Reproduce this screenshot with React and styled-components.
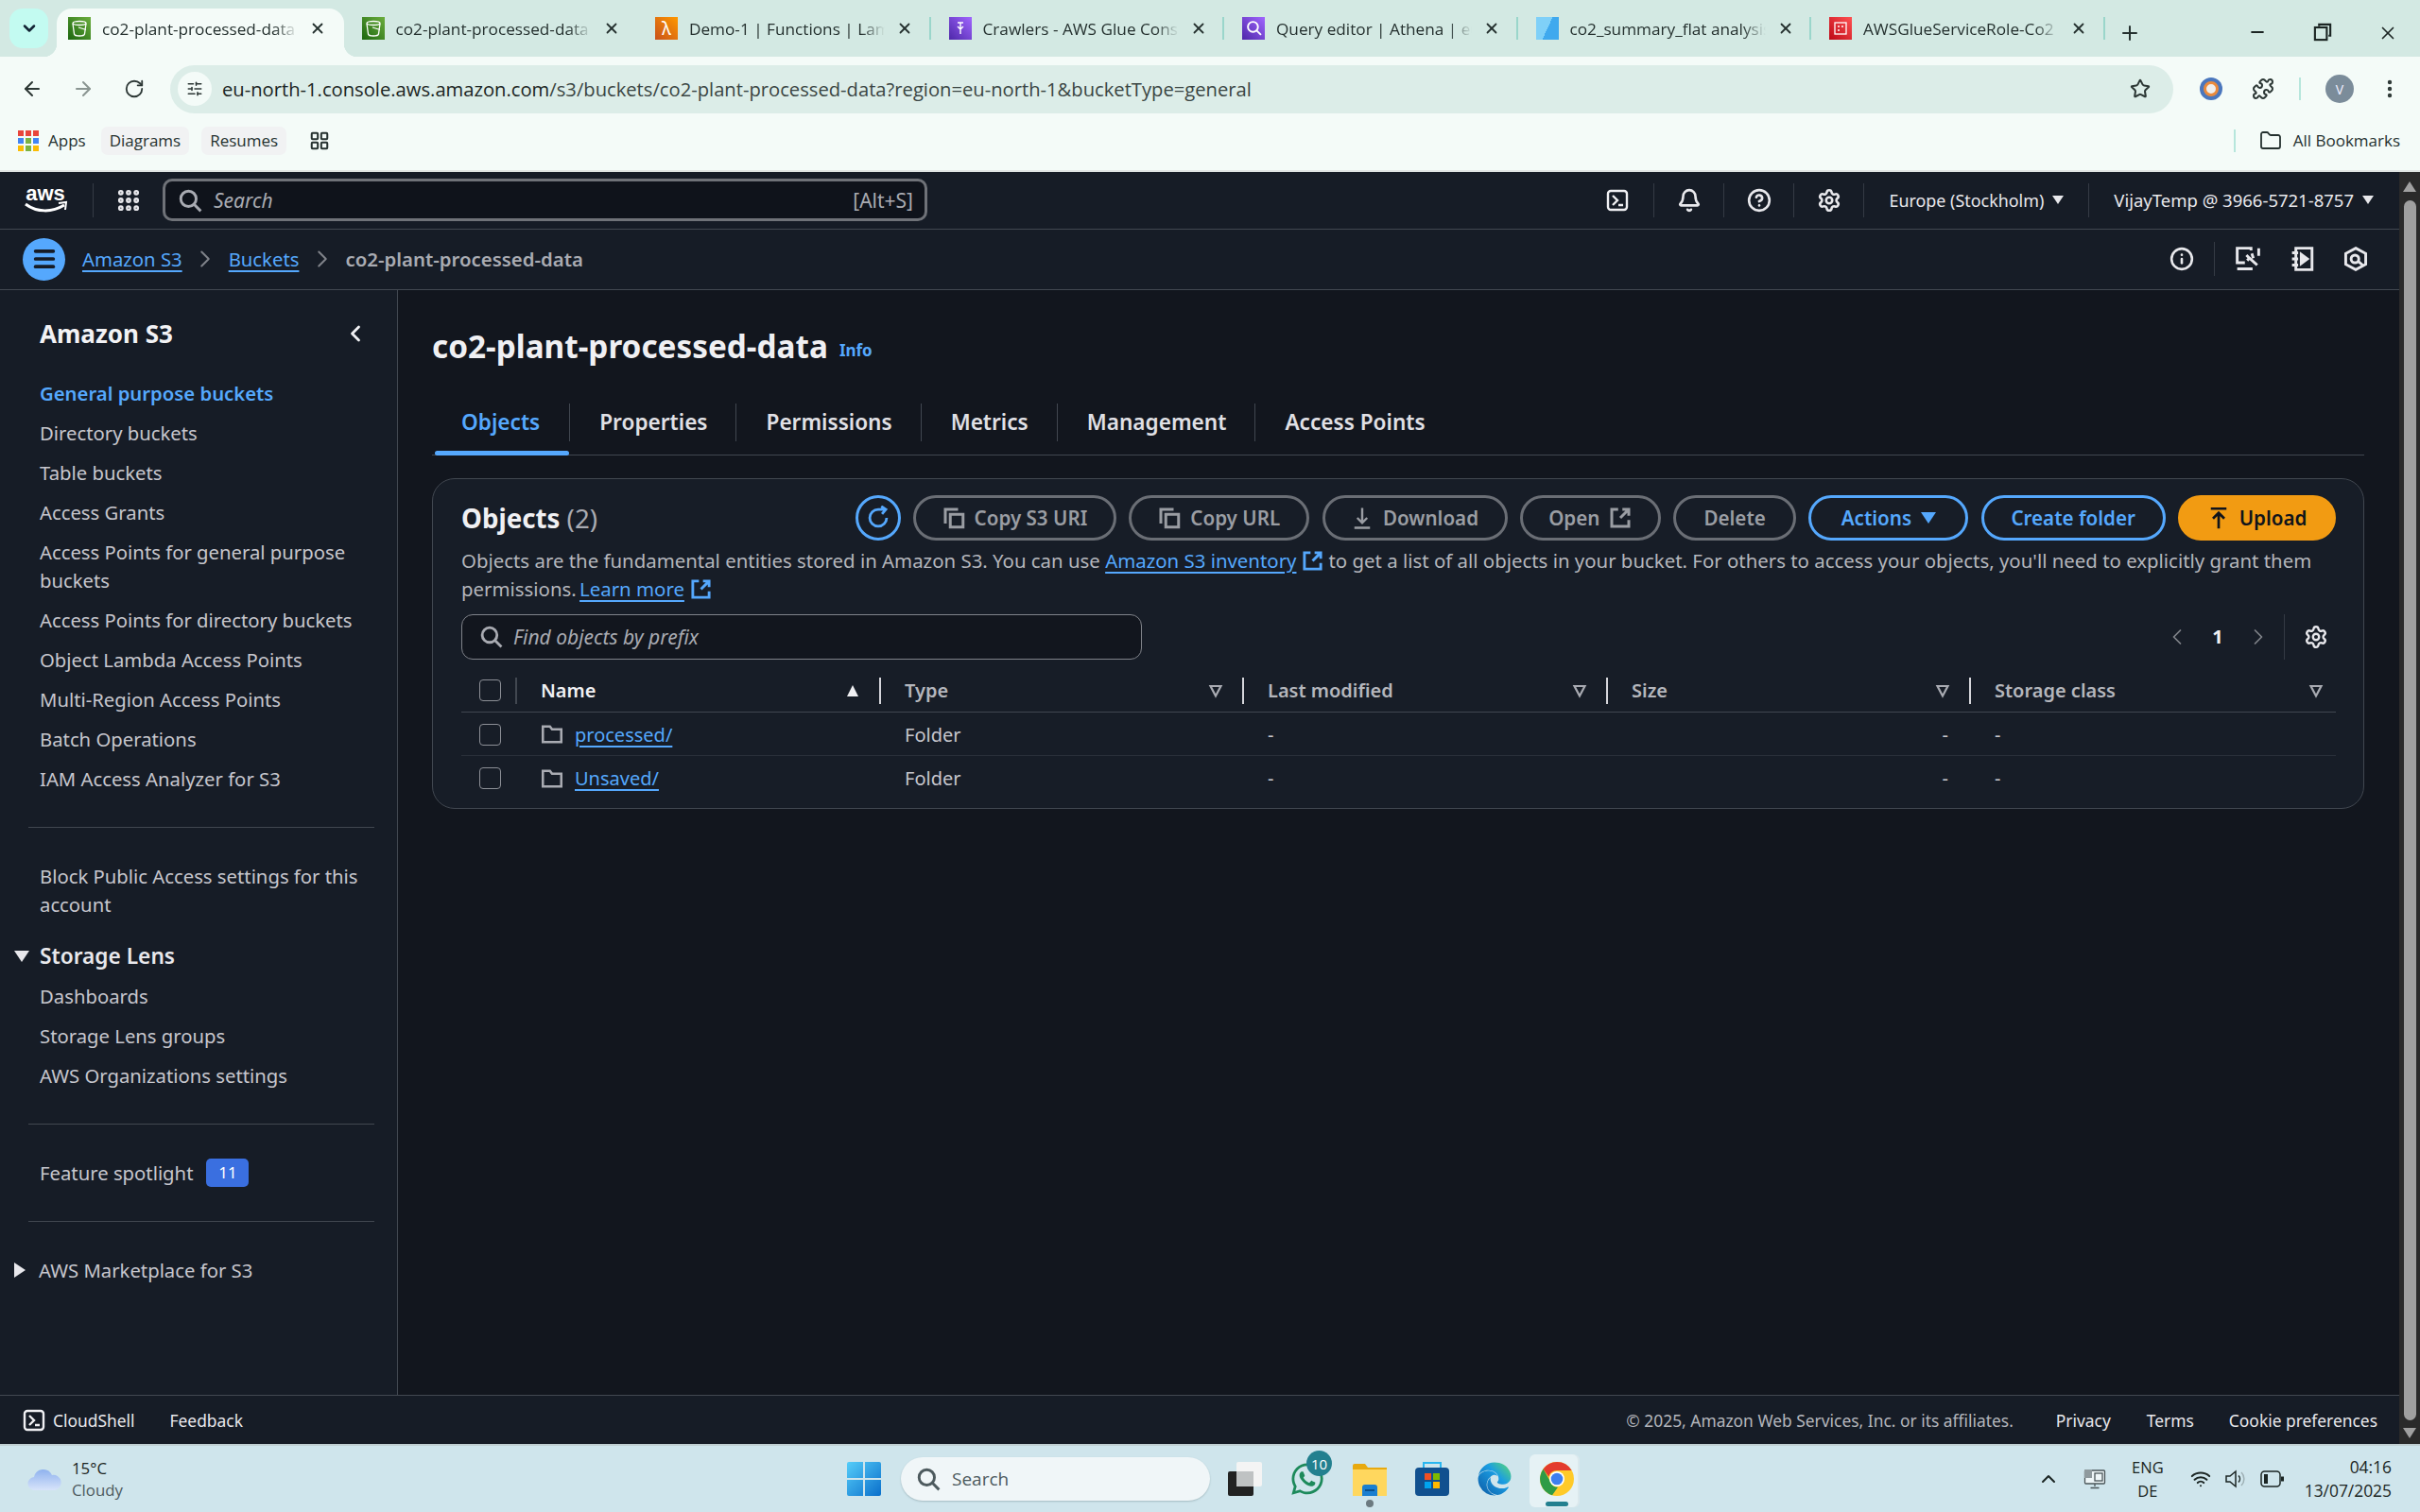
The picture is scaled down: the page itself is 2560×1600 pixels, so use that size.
import React from 'react';
import styled, { createGlobalStyle } from 'styled-components';
import {
  ChevronDown, X, Plus, Minus, ArrowLeft, ArrowRight, RotateCw, Star, Puzzle, MoreVertical, SlidersHorizontal,
  Bell, CircleHelp, Settings, Info, ChevronLeft, ChevronRight, Grip, LayoutGrid, ChevronUp, Wifi, Menu, Folder as LucideFolder,
} from 'lucide-react';
import { FaWhatsapp, FaEdge } from 'react-icons/fa';

const GlobalStyle = createGlobalStyle`
  html, body { margin: 0; padding: 0; background: #161c26; }
  body { font-family: "Noto Sans", "Open Sans", sans-serif; }
  * { box-sizing: border-box; }
`;

const BLUE = '#55a8fd';
const TEXT = '#c6c6cd';
const LINE = '#414750';
const TABLE_COLS = '57px 385px 384px 385px 384px 1fr';

const Page = styled.div`
  width: 2560px;
  height: 1600px;
  display: flex;
  flex-direction: column;
  overflow: hidden;
`;

/* ---- browser ---- */
const TabStrip = styled.div`
  height: 60px;
  background: #d3e9e3;
  display: flex;
  align-items: flex-end;
  padding-left: 10px;
`;
const TabSearch = styled.div`
  width: 41px;
  height: 42px;
  margin: 0 9px 9px 0;
  border-radius: 14px;
  background: #c3fbf1;
  color: #123;
  display: flex;
  align-items: center;
  justify-content: center;
`;
const Tab = styled.div`
  position: relative;
  width: ${p => (p.$active ? 303.5 : 310.5)}px;
  height: 51px;
  padding: 0 15px 9px ${p => (p.$active ? 12 : 19)}px;
  display: flex;
  align-items: center;
  gap: 12px;
  color: #25312f;
  border-radius: 16px 16px 0 0;
  background: ${p => (p.$active ? '#f4fbf8' : 'transparent')};
  ${p => p.$sep && `
    &::after {
      content: '';
      position: absolute;
      right: 0;
      top: 9px;
      width: 2px;
      height: 24px;
      background: #9ad6cb;
    }
  `}
  ${p => p.$active && `
    &::before, &::after {
      content: '';
      position: absolute;
      bottom: 0;
      width: 14px;
      height: 14px;
    }
    &::before {
      left: -14px;
      background: radial-gradient(circle at 0 0, transparent 14px, #f4fbf8 14.5px);
    }
    &::after {
      right: -14px;
      background: radial-gradient(circle at 100% 0, transparent 14px, #f4fbf8 14.5px);
    }
  `}
`;
const Favicon = styled.div`
  width: 24px;
  height: 24px;
  flex: none;
  background: ${p => p.$bg};
  display: flex;
  align-items: center;
  justify-content: center;
  color: #fff;
`;
const TabTitle = styled.div`
  width: 207px;
  flex: none;
  padding-top: 2px;
  font-family: "Open Sans", sans-serif;
  font-size: 17.2px;
  white-space: nowrap;
  overflow: hidden;
  -webkit-mask-image: linear-gradient(to right, #000 88%, transparent);
  mask-image: linear-gradient(to right, #000 88%, transparent);
`;
const NewTab = styled.div`
  width: 30px;
  margin: 0 0 13px 14px;
  color: #25312f;
  display: flex;
`;
const WindowButtons = styled.div`
  margin-left: auto;
  margin-bottom: 14px;
  display: flex;
  color: #1b2523;
`;
const WindowButton = styled.div`
  width: 69px;
  display: flex;
  justify-content: center;
`;

const Toolbar = styled.div`
  height: 60px;
  background: #f4fbf8;
  display: flex;
  align-items: center;
  padding: 9px 0 0 7px;
  color: #2c3735;
`;
const NavIcon = styled.div`
  width: 54px;
  flex: none;
  display: flex;
  justify-content: center;
  color: ${p => (p.$dim ? '#8a9592' : '#2c3735')};
`;
const AddressBar = styled.div`
  width: 2119px;
  height: 51px;
  margin-left: 11px;
  border-radius: 26px;
  background: #dcede8;
  display: flex;
  align-items: center;
  padding: 0 24px 0 8px;
`;
const SiteInfo = styled.div`
  width: 36px;
  height: 36px;
  border-radius: 18px;
  background: #f4fbf8;
  display: flex;
  align-items: center;
  justify-content: center;
`;
const Url = styled.div`
  margin-left: 11px;
  font-family: "Open Sans", sans-serif;
  font-size: 20.2px;
  color: #3a4543;
  white-space: nowrap;
  flex: 1;
  span { color: #1b2523; }
`;
const ToolGroup = styled.div`
  display: flex;
  align-items: center;
  margin-left: 22px;
`;
const ToolDivider = styled.div`
  width: 2px;
  height: 24px;
  margin: 0 ${p => p.$gap || 24}px;
  background: #b6e6dc;
`;
const Avatar = styled.div`
  width: 30px;
  height: 30px;
  margin-right: 11px;
  border-radius: 50%;
  background: #7b8c9a;
  color: #eef;
  font-size: 14px;
  flex: none;
  display: flex;
  align-items: center;
  justify-content: center;
`;
const ExtBadge = styled.div`
  width: 24px;
  height: 24px;
  margin: 0 31px 0 6px;
  border-radius: 50%;
  background: #4a76bd;
  display: flex;
  align-items: center;
  justify-content: center;
  &::after {
    content: '';
    width: 10px;
    height: 10px;
    border-radius: 50%;
    border: 3px solid #ea8a3c;
    background: #eee;
  }
`;
const Bookmarks = styled.div`
  height: 62px;
  padding: 0 21px 2px 19px;
  background: #f4fbf8;
  border-bottom: 2px solid #dfe4e2;
  display: flex;
  align-items: center;
  font-family: "Open Sans", sans-serif;
  font-size: 17px;
  color: #25312f;
`;
const AppsLabel = styled.div`
  margin: 0 16px 0 10px;
`;
const BookmarkChip = styled.div`
  height: 30px;
  padding: 0 9px;
  margin-right: 13px;
  border-radius: 7px;
  background: #f1f2f3;
  display: flex;
  align-items: center;
`;
const AllBookmarks = styled.div`
  margin-left: auto;
  display: flex;
  align-items: center;
  gap: 12px;
`;
const BookmarkDivider = styled.div`
  width: 2px;
  height: 24px;
  background: #b6e6dc;
  margin-right: 13px;
`;

/* ---- console ---- */
const Console = styled.div`
  height: 1348px;
  display: flex;
  background: #161c26;
`;
const ConsoleBody = styled.div`
  flex: 1;
  min-width: 0;
  display: flex;
  flex-direction: column;
`;
const ScrollTrack = styled.div`
  width: 22px;
  background: #2a2a2a;
  display: flex;
  flex-direction: column;
  align-items: center;
  padding: 10px 0 6px;
`;
const ScrollArrow = styled.div`
  width: 0;
  height: 0;
  border-left: 7px solid transparent;
  border-right: 7px solid transparent;
  ${p => (p.$down ? 'border-top: 11px solid #a0a0a0;' : 'border-bottom: 11px solid #a0a0a0;')}
`;
const ScrollThumb = styled.div`
  flex: 1;
  width: 13px;
  margin: 9px 0 8px;
  border-radius: 7px;
  background: #9f9f9f;
`;
const TopNav = styled.div`
  height: 61px;
  flex: none;
  border-bottom: 1px solid ${LINE};
  display: flex;
  align-items: center;
  padding: 0 27px 0 24px;
  color: #e8e8ec;
`;
const AwsLogo = styled.svg`
  width: 48px;
  height: 32px;
  flex: none;
`;
const NavDivider = styled.div`
  width: 1px;
  height: ${p => p.$h || 36}px;
  margin-left: ${p => p.$ml || 0}px;
  background: #343a44;
  flex: none;
`;
const NavSlot = styled.div`
  width: ${p => p.$w}px;
  flex: none;
  display: flex;
  justify-content: center;
  color: #e8e8ec;
`;
const SearchBox = styled.div`
  width: 809px;
  height: 45px;
  border: 3px solid #6f7278;
  border-radius: 10px;
  background: #0f131b;
  display: flex;
  align-items: center;
  padding: 0 12px 0 13px;
  color: #a9abb2;
  font-size: 21px;
  margin-right: auto;
`;
const SearchHint = styled.em`
  margin-left: 12px;
  flex: 1;
`;
const NavLabel = styled.div`
  display: flex;
  align-items: center;
  gap: 9px;
  padding: 0 ${p => (p.$last ? 0 : 26)}px 0 26px;
  font-size: ${p => p.$size}px;
  white-space: nowrap;
  color: #e8e8ec;
`;
const Caret = styled.span`
  width: 0;
  height: 0;
  border-left: ${p => p.$size || 6}px solid transparent;
  border-right: ${p => p.$size || 6}px solid transparent;
  border-top: ${p => (p.$size || 6) * 1.5}px solid currentColor;
`;
const Crumbs = styled.div`
  height: 64px;
  flex: none;
  border-bottom: 1px solid ${LINE};
  display: flex;
  align-items: center;
  padding: 0 13px 0 24px;
  font-size: 20.3px;
`;
const MenuButton = styled.div`
  width: 45px;
  height: 45px;
  border-radius: 50%;
  background: ${BLUE};
  color: #161c26;
  display: flex;
  align-items: center;
  justify-content: center;
  margin-right: 18px;
`;
const A = styled.a`
  color: ${BLUE};
  text-decoration: underline;
  text-underline-offset: 4px;
  text-decoration-thickness: 2px;
`;
const LearnMore = styled(A)`
  margin-left: -2px;
`;
const CrumbSep = styled.div`
  width: 49px;
  display: flex;
  justify-content: center;
  color: #80838a;
`;
const CrumbCurrent = styled.div`
  color: #a9abb2;
  font-weight: 600;
  font-size: 20.4px;
  margin-right: auto;
`;
const Workspace = styled.div`
  flex: 1;
  min-height: 0;
  display: flex;
`;
const Sidebar = styled.aside`
  width: 421px;
  flex: none;
  border-right: 1px solid ${LINE};
  padding: 22px 0 0;
  background: #161c26;
`;
const SideTitle = styled.div`
  height: 48px;
  padding: 0 30px 0 42px;
  margin-bottom: 18px;
  display: flex;
  align-items: center;
  justify-content: space-between;
  font-size: 26px;
  font-weight: 700;
  color: #f2f2f5;
`;
const SideItem = styled.div`
  padding: 6px 20px 6px 42px;
  font-size: 20.3px;
  line-height: 30px;
  color: ${p => (p.$active ? BLUE : TEXT)};
  font-weight: ${p => (p.$active ? 600 : 400)};
  display: flex;
  align-items: center;
  gap: 14px;
`;
const SideDivider = styled.div`
  width: 366px;
  height: 1px;
  margin: 30px 0 30px 30px;
  background: ${LINE};
`;
const SideGroup = styled.div`
  display: flex;
  align-items: center;
  height: 42px;
  margin-top: ${p => p.$top || 0}px;
  padding-left: 15px;
  font-size: ${p => (p.$strong ? 22.7 : 20.3)}px;
  font-weight: ${p => (p.$strong ? 600 : 400)};
  color: ${p => (p.$strong ? '#e8e8ec' : TEXT)};
`;
const Tri = styled.span`
  width: 0;
  height: 0;
  margin-right: ${p => p.$mr}px;
  ${p => (p.$open
    ? 'border-left: 8px solid transparent; border-right: 8px solid transparent; border-top: 12px solid #e8e8ec;'
    : 'border-top: 8px solid transparent; border-bottom: 8px solid transparent; border-left: 12px solid #e8e8ec;')}
`;
const Count = styled.span`
  width: 45px;
  height: 30px;
  border-radius: 5px;
  background: #3a6fe0;
  color: #fff;
  font-size: 17px;
  display: flex;
  align-items: center;
  justify-content: center;
`;
const Main = styled.main`
  flex: 1;
  min-width: 0;
  padding: 34px 37px 0 36px;
  background: #12161e;
`;
const Heading = styled.div`
  height: 50px;
  display: flex;
  align-items: center;
  gap: 12px;
  font-size: 33.300px;
  font-weight: 700;
  color: #f0f0f3;
`;
const InfoLink = styled.span`
  font-size: 17px;
  font-weight: 700;
  color: ${BLUE};
  margin-top: 10px;
`;
const TabsBar = styled.div`
  margin-top: 27px;
  height: 64px;
  border-bottom: 1px solid ${LINE};
  display: flex;
  padding-left: 3px;
`;
const PageTab = styled.div`
  position: relative;
  height: 40px;
  margin-top: 9px;
  padding: 0 ${p => (p.$active ? 31 : 30)}px 0 ${p => (p.$active ? 28 : 31)}px;
  border-right: ${p => (p.$last ? 'none' : `1px solid ${LINE}`)};
  display: flex;
  align-items: center;
  font-size: 22.6px;
  font-weight: 600;
  color: ${p => (p.$active ? BLUE : '#e0e0e5')};
  ${p => p.$active && `
    &::after {
      content: '';
      position: absolute;
      left: 0;
      right: 0;
      bottom: -15px;
      height: 5px;
      border-radius: 3px;
      background: ${BLUE};
    }
  `}
`;
const Panel = styled.section`
  margin-top: 24px;
  height: 350px;
  border: 1px solid ${LINE};
  border-radius: 24px;
  background: #171d27;
  padding: 17px 29px 8px 30px;
`;
const PanelHead = styled.div`
  display: flex;
  align-items: center;
  height: 48px;
`;
const PanelTitle = styled.div`
  font-size: 27.7px;
  font-weight: 700;
  color: #f0f0f3;
  margin-right: auto;
  span { font-weight: 400; color: #a9abb2; }
`;
const Actions = styled.div`
  display: flex;
  gap: 13.300px;
`;
const RefreshBtn = styled.div`
  width: 48px;
  height: 48px;
  border: 3px solid ${BLUE};
  border-radius: 50%;
  color: ${BLUE};
  display: flex;
  align-items: center;
  justify-content: center;
`;
const Btn = styled.div`
  width: ${p => p.$w}px;
  height: 48px;
  border-radius: 24px;
  border: 3px solid ${p => (p.$primary ? BLUE : p.$solid ? '#f29b12' : '#6a6e75')};
  background: ${p => (p.$solid ? '#f29b12' : 'transparent')};
  color: ${p => (p.$primary ? BLUE : p.$solid ? '#10141b' : '#9a9da3')};
  display: flex;
  align-items: center;
  justify-content: center;
  gap: 10px;
  font-size: 20.6px;
  font-weight: 600;
  white-space: nowrap;
`;
const Desc = styled.p`
  margin: 6px 0 0;
  font-size: 20.4px;
  line-height: 30px;
  color: #b4b6bc;
  white-space: nowrap;
`;
const ExtLink = styled.span`
  display: inline-flex;
  vertical-align: -4px;
  margin: 0 5px 0 6px;
  color: ${BLUE};
`;
const FilterRow = styled.div`
  margin-top: 12px;
  display: flex;
  align-items: center;
  height: 48px;
`;
const FilterInput = styled.div`
  width: 720px;
  height: 48px;
  border: 1px solid #80838a;
  border-radius: 12px;
  background: #12161e;
  display: flex;
  align-items: center;
  gap: 11px;
  padding: 0 18px;
  color: #a9abb2;
  font-size: 21px;
  margin-right: auto;
`;
const Pager = styled.div`
  display: flex;
  align-items: center;
  color: #80838a;
  height: 48px;
  padding-right: 8px;
`;
const PageNumber = styled.div`
  width: 58px;
  text-align: center;
  color: #f0f0f3;
  font-size: 20px;
  font-weight: 700;
`;
const PagerDivider = styled.div`
  width: 1px;
  height: 48px;
  margin: 0 20px 0 13px;
  background: #343a44;
`;
const TableHead = styled.div`
  display: grid;
  grid-template-columns: ${TABLE_COLS};
  align-items: center;
  height: 45px;
  margin-top: 11px;
  border-bottom: 1px solid ${LINE};
`;
const SelectCell = styled.div`
  padding-left: 19px;
  display: flex;
`;
const Check = styled.div`
  width: 23px;
  height: 23px;
  border: 1.5px solid #8c8f96;
  border-radius: 4px;
`;
const HeadCell = styled.div`
  height: 28px;
  border-left: 2px solid ${p => (p.$dim ? '#414750' : '#d5d5da')};
  padding: 0 ${p => (p.$end ? 13 : 20)}px 0 25px;
  display: flex;
  align-items: center;
  justify-content: space-between;
  font-size: 20px;
  font-weight: 600;
  color: ${p => (p.$strong ? '#f0f0f3' : '#b4b6bc')};
`;
const Row = styled.div`
  display: grid;
  grid-template-columns: ${TABLE_COLS};
  align-items: center;
  height: 46px;
  padding-top: 2px;
  border-bottom: ${p => (p.$last ? 'none' : '1px solid #2a303a')};
  font-size: 20px;
  color: ${TEXT};
`;
const NameCell = styled.div`
  padding-left: 27px;
  display: flex;
  align-items: center;
  gap: 12px;
  color: #a9abb2;
`;
const DataCell = styled.div`
  padding: 0 ${p => (p.$right ? 22 : 0)}px 0 27px;
  text-align: ${p => (p.$right ? 'right' : 'left')};
`;
const Footer = styled.footer`
  height: 52px;
  flex: none;
  border-top: 1px solid ${LINE};
  background: #161c26;
  display: flex;
  align-items: center;
  padding: 0 23px 0 24px;
  font-size: 17.4px;
  color: #e8e8ec;
`;
const FootLink = styled.div`
  margin-left: ${p => p.$ml}px;
  display: flex;
  align-items: center;
  gap: 8px;
`;
const Copyright = styled.div`
  margin-left: auto;
  color: #b4b6bc;
`;

/* ---- taskbar ---- */
const Taskbar = styled.div`
  height: 72px;
  flex: none;
  border-top: 2px solid #c0cfd2;
  background: #cfe5ec;
  display: flex;
  align-items: center;
  color: #1b2523;
  font-family: "Open Sans", sans-serif;
`;
const Weather = styled.div`
  width: 896px;
  flex: none;
  padding-left: 29px;
  display: flex;
  align-items: center;
  gap: 11px;
  font-size: 16.8px;
  line-height: 23px;
`;
const Muted = styled.div`
  color: #4d5a5e;
`;
const TaskSearch = styled.div`
  width: 327px;
  height: 46px;
  margin: 0 19px 0 21px;
  border-radius: 23px;
  background: #f0f6f8;
  box-shadow: 0 1px 2px #a5bcc2;
  display: flex;
  align-items: center;
  gap: 12px;
  padding: 0 16px;
  font-size: 19px;
  color: #4d5a5e;
`;
const TaskIcons = styled.div`
  display: flex;
  gap: 30px;
  align-items: center;
`;
const TaskIcon = styled.div`
  position: relative;
  width: 36px;
  height: 36px;
  display: flex;
  align-items: center;
  justify-content: center;
  ${p => p.$running && `
    &::before {
      content: '';
      position: absolute;
      inset: -8px -4px -12px -11px;
      border-radius: 6px;
      background: #e6f2f5;
      box-shadow: 2px 0 0 #dbe9ed;
    }
    &::after {
      content: '';
      position: absolute;
      left: 6px;
      bottom: -11px;
      width: 24px;
      height: 5px;
      border-radius: 3px;
      background: #23808f;
    }
  `}
  ${p => p.$open && `
    &::after {
      content: '';
      position: absolute;
      left: 14px;
      bottom: -12px;
      width: 8px;
      height: 8px;
      border-radius: 50%;
      background: #6c7a80;
    }
  `}
  svg { position: relative; }
`;
const CountBadge = styled.div`
  position: absolute;
  top: -12px;
  right: -8px;
  width: 27px;
  height: 27px;
  border-radius: 50%;
  background: #23808f;
  color: #fff;
  font-size: 15px;
  display: flex;
  align-items: center;
  justify-content: center;
`;
const Tray = styled.div`
  margin-left: auto;
  padding-right: 30px;
  display: flex;
  align-items: center;
`;
const TrayIcon = styled.div`
  margin-left: ${p => p.$ml}px;
  display: flex;
`;
const Lang = styled.div`
  margin-left: 27px;
  text-align: center;
  font-size: 16.5px;
  line-height: 25px;
`;
const Clock = styled.div`
  margin-left: 21px;
  text-align: right;
  font-size: 17.4px;
  line-height: 25px;
`;

/* AWS style line icons, 16 unit grid */
const Line = ({ size = 24, w = 2, children }) => (
  <svg width={size} height={size} viewBox="0 0 16 16" fill="none" stroke="currentColor" strokeWidth={w}>
    {children}
  </svg>
);
const CopyIcon = () => <Line><path d="M2 12V2h9" /><rect x="5.500" y="5.500" width="9" height="9" /></Line>;
const ExternalIcon = ({ size = 24 }) => <Line size={size}><path d="M6.500 2H2v12h12V9.500M9.500 2H14v4.500M14 2 8 8" /></Line>;
const DownloadIcon = () => <Line w={1.6}><path d="M8 1v10.500M4.500 8 8 11.500 11.500 8M2.500 15h11" /></Line>;
const UploadIcon = () => <Line w={1.8}><path d="M2.500 1.500h11M8 15.500V5M4 8.500 8 4.500l4 4" /></Line>;
const RefreshIcon = () => <Line size={26} w={1.7}><path d="M13.500 8A5.500 5.500 0 1 1 8 2.500h5M10 .5l3 2-2.500 3" /></Line>;
const SearchIcon = ({ size = 24 }) => <Line size={size} w={1.8}><circle cx="7" cy="7" r="5" /><path d="M10.500 10.500 15 15" /></Line>;
const FolderIcon = () => <Line w={1.7}><path d="M1.500 2.500h5l1.500 2h6.500v9h-13Z" /></Line>;
const ToolsIcon = () => (
  <Line size={26} w={1.8}>
    <path d="M10 2.500V1H1v9.500h5M1 14.500h10M15 1v5" />
    <path d="M7 5.500l2 2-1.500 1.500M9 7.500l5 4.500M10.500 4.500l1 3" />
  </Line>
);
const NotebookIcon = () => (
  <Line size={26} w={1.8}>
    <path d="M3.500 1H14v14H3.500ZM1 4h4M1 8h4M1 12h4" />
    <path d="M7 5l4 3-4 3Z" fill="currentColor" />
  </Line>
);
const HexIcon = () => (
  <Line size={26} w={1.8}>
    <path d="M8 1l6.500 3.500v7L8 15l-6.500-3.500v-7Z" />
    <circle cx="7.500" cy="8" r="2.500" />
    <path d="M9.500 9.500l3 2.500" />
  </Line>
);
const NetworkIcon = () => (
  <svg width="24" height="24" viewBox="0 0 24 24" fill="none" stroke="#4a5558" strokeWidth="1.3">
    <rect x="1.500" y="3" width="21" height="14" rx="1" fill="#eef6f8" />
    <path d="M12 17v3M7.500 21.500h9" />
    <rect x="1" y="2" width="8" height="9" fill="#8f9a9e" stroke="none" />
    <rect x="12" y="6" width="8" height="8" />
  </svg>
);
const VolumeIcon = () => (
  <svg width="24" height="24" viewBox="0 0 24 24" fill="none" strokeWidth="1.500">
    <path d="M2 9v6h4l6 5V4L6 9Z" stroke="#1b2523" />
    <path d="M15 8.500a5 5 0 0 1 0 7" stroke="#1b2523" />
    <path d="M18 5a10 10 0 0 1 0 14" stroke="#9fb0b5" />
  </svg>
);
const BatteryIcon = () => (
  <svg width="26" height="20" viewBox="0 0 26 20" fill="none" stroke="#1b2523" strokeWidth="1.500">
    <rect x="1" y="2" width="20" height="16" rx="3.500" />
    <rect x="4" y="5" width="4" height="10" fill="#1b2523" stroke="none" />
    <path d="M23.500 7.500v5" strokeWidth="3" />
  </svg>
);
const AppsGrid = () => {
  const colours = ['#e8453c', '#e8453c', '#e8453c', '#4285f4', '#7cb342', '#4285f4', '#fbbc05', '#7cb342', '#fbbc05'];
  return (
    <svg width="22" height="22" viewBox="0 0 22 22">
      {colours.map((c, i) => (
        <rect key={i} x={(i % 3) * 8} y={Math.floor(i / 3) * 8} width="6" height="6" fill={c} />
      ))}
    </svg>
  );
};

const FilterArrow = ({ up }) => (
  <svg width="16" height="16" viewBox="0 0 16 16">
    {up
      ? <path d="M8 2 14 14H2Z" fill="#f0f0f3" />
      : <path d="M2.500 3h11L8 13.500Z" fill="none" stroke="#a9abb2" strokeWidth="2.200" />}
  </svg>
);

const Terminal = ({ size = 24 }) => (
  <svg width={size} height={size} viewBox="0 0 24 24" fill="none" stroke="#f0f0f3" strokeWidth="2.400">
    <rect x="2" y="2" width="20" height="20" rx="3" />
    <path d="M7 7l5 5-5 5M13 17h5" />
  </svg>
);

const Bucket = () => (
  <svg width="18" height="18" viewBox="0 0 18 18" fill="none" stroke="#fff" strokeWidth="1.300">
    <ellipse cx="9" cy="3.500" rx="7" ry="2" />
    <path d="M2 4l1.500 11c.2 1 2.500 2 5.500 2s5.300-1 5.500-2L16 4M8 8l8 2.500" />
  </svg>
);

const tabs = [
  { bg: 'linear-gradient(45deg,#1b660f,#6cae3e)', title: 'co2-plant-processed-data', icon: <Bucket />, active: true },
  { bg: 'linear-gradient(45deg,#1b660f,#6cae3e)', title: 'co2-plant-processed-data', icon: <Bucket /> },
  { bg: 'linear-gradient(45deg,#c8511b,#f90)', title: 'Demo-1 | Functions | Lambda', icon: <span style={{ fontSize: 19 }}>λ</span>, sep: true },
  { bg: 'linear-gradient(45deg,#4d27a8,#a166ff)', title: 'Crawlers - AWS Glue Console', icon: <Line size={16} w={1.4}><path d="M5 2h6M8 2v12M5 6l3 3 3-3" /></Line>, sep: true },
  { bg: 'linear-gradient(45deg,#4d27a8,#a166ff)', title: 'Query editor | Athena | eu-north', icon: <SearchIcon size={17} />, sep: true },
  { bg: 'linear-gradient(115deg,#7fd0f8 50%,#3fa9ee 50%)', title: 'co2_summary_flat analysis', sep: true },
  { bg: 'linear-gradient(45deg,#bd0816,#ff5252)', title: 'AWSGlueServiceRole-Co2', icon: <Line size={16} w={1.300}><rect x="2" y="2" width="12" height="12" /><path d="M5 6h2M5 10h2M9 6h2" /></Line>, sep: true },
];

const sideItems = [
  'Directory buckets', 'Table buckets', 'Access Grants', 'Access Points for general purpose buckets',
  'Access Points for directory buckets', 'Object Lambda Access Points', 'Multi-Region Access Points',
  'Batch Operations', 'IAM Access Analyzer for S3',
];

const rows = ['processed/', 'Unsaved/'];
const columns = ['Type', 'Last modified', 'Size', 'Storage class'];

export default function App() {
  return (
    <Page>
      <GlobalStyle />
      <TabStrip>
        <TabSearch><ChevronDown size={20} strokeWidth={3} /></TabSearch>
        {tabs.map((t, i) => (
          <Tab key={i} $active={t.active} $sep={t.sep}>
            <Favicon $bg={t.bg}>{t.icon}</Favicon>
            <TabTitle>{t.title}</TabTitle>
            <X size={18} strokeWidth={2.400} />
          </Tab>
        ))}
        <NewTab><Plus size={24} strokeWidth={2} /></NewTab>
        <WindowButtons>
          <WindowButton><Minus size={20} strokeWidth={2.500} /></WindowButton>
          <WindowButton><Line size={20} w={1.700}><path d="M5 3V1.500h9.500V11H13" /><rect x="1.500" y="4" width="10" height="10.500" /></Line></WindowButton>
          <WindowButton><X size={22} strokeWidth={1.800} /></WindowButton>
        </WindowButtons>
      </TabStrip>

      <Toolbar>
        <NavIcon><ArrowLeft size={24} /></NavIcon>
        <NavIcon $dim><ArrowRight size={24} /></NavIcon>
        <NavIcon><RotateCw size={22} /></NavIcon>
        <AddressBar>
          <SiteInfo><SlidersHorizontal size={18} /></SiteInfo>
          <Url><span>eu-north-1.console.aws.amazon.com</span>/s3/buckets/co2-plant-processed-data?region=eu-north-1&amp;bucketType=general</Url>
          <Star size={22} strokeWidth={2.200} />
        </AddressBar>
        <ToolGroup>
          <ExtBadge />
          <Puzzle size={24} strokeWidth={2} />
          <ToolDivider $gap={26} />
          <Avatar>V</Avatar>
          <NavIcon><MoreVertical size={24} strokeWidth={2.400} /></NavIcon>
        </ToolGroup>
      </Toolbar>

      <Bookmarks>
        <AppsGrid />
        <AppsLabel>Apps</AppsLabel>
        <BookmarkChip>Diagrams</BookmarkChip>
        <BookmarkChip>Resumes</BookmarkChip>
        <LayoutGrid size={22} strokeWidth={2.200} style={{ marginLeft: 11 }} />
        <AllBookmarks>
          <BookmarkDivider />
          <LucideFolder size={24} strokeWidth={1.800} />
          All Bookmarks
        </AllBookmarks>
      </Bookmarks>

      <Console>
        <ConsoleBody>
          <TopNav>
            <AwsLogo viewBox="0 0 48 32">
              <text x="24" y="16" textAnchor="middle" fontFamily="Liberation Sans" fontWeight="700" fontSize="22" fill="#fff">aws</text>
              <path d="M3 20c12 9 28 9 41 1" fill="none" stroke="#fff" strokeWidth="3" />
              <path d="M38 19l8-1-1 8" fill="none" stroke="#fff" strokeWidth="2" />
            </AwsLogo>
            <NavDivider $ml={26} />
            <NavSlot $w={73}><Grip size={28} strokeWidth={3} /></NavSlot>
            <SearchBox>
              <SearchIcon size={26} />
              <SearchHint>Search</SearchHint>
              [Alt+S]
            </SearchBox>
            <NavSlot $w={76}><Terminal /></NavSlot>
            <NavDivider />
            <NavSlot $w={73}><Bell size={26} strokeWidth={2.400} /></NavSlot>
            <NavDivider />
            <NavSlot $w={73}><CircleHelp size={26} strokeWidth={2.400} /></NavSlot>
            <NavDivider />
            <NavSlot $w={73}><Settings size={26} strokeWidth={2.400} /></NavSlot>
            <NavDivider />
            <NavLabel $size={17.9}>Europe (Stockholm) <Caret /></NavLabel>
            <NavDivider />
            <NavLabel $size={18.5} $last>VijayTemp @ 3966-5721-8757 <Caret /></NavLabel>
          </TopNav>

          <Crumbs>
            <MenuButton><Menu size={28} strokeWidth={3.200} /></MenuButton>
            <A>Amazon S3</A>
            <CrumbSep><ChevronRight size={30} strokeWidth={1.600} /></CrumbSep>
            <A>Buckets</A>
            <CrumbSep><ChevronRight size={30} strokeWidth={1.600} /></CrumbSep>
            <CrumbCurrent>co2-plant-processed-data</CrumbCurrent>
            <NavSlot $w={68}><Info size={26} strokeWidth={2.400} /></NavSlot>
            <NavDivider $h={36} />
            <NavSlot $w={70}><ToolsIcon /></NavSlot>
            <NavSlot $w={46}><NotebookIcon /></NavSlot>
            <NavSlot $w={66}><HexIcon /></NavSlot>
          </Crumbs>

          <Workspace>
            <Sidebar>
              <SideTitle>Amazon S3 <ChevronLeft size={28} strokeWidth={2.400} /></SideTitle>
              <SideItem $active>General purpose buckets</SideItem>
              {sideItems.map(s => <SideItem key={s}>{s}</SideItem>)}
              <SideDivider />
              <SideItem>Block Public Access settings for this account</SideItem>
              <SideGroup $strong $top={13}><Tri $open $mr={11} />Storage Lens</SideGroup>
              <SideItem>Dashboards</SideItem>
              <SideItem>Storage Lens groups</SideItem>
              <SideItem>AWS Organizations settings</SideItem>
              <SideDivider />
              <SideItem>Feature spotlight <Count>11</Count></SideItem>
              <SideDivider />
              <SideGroup><Tri $mr={14} />AWS Marketplace for S3</SideGroup>
            </Sidebar>

            <Main>
              <Heading>co2-plant-processed-data <InfoLink>Info</InfoLink></Heading>
              <TabsBar>
                <PageTab $active>Objects</PageTab>
                <PageTab>Properties</PageTab>
                <PageTab>Permissions</PageTab>
                <PageTab>Metrics</PageTab>
                <PageTab>Management</PageTab>
                <PageTab $last>Access Points</PageTab>
              </TabsBar>

              <Panel>
                <PanelHead>
                  <PanelTitle>Objects <span>(2)</span></PanelTitle>
                  <Actions>
                    <RefreshBtn><RefreshIcon /></RefreshBtn>
                    <Btn $w={215}><CopyIcon />Copy S3 URI</Btn>
                    <Btn $w={191}><CopyIcon />Copy URL</Btn>
                    <Btn $w={196}><DownloadIcon />Download</Btn>
                    <Btn $w={149}>Open<ExternalIcon /></Btn>
                    <Btn $w={130}>Delete</Btn>
                    <Btn $w={169} $primary>Actions<Caret $size={8} /></Btn>
                    <Btn $w={195} $primary>Create folder</Btn>
                    <Btn $w={167} $solid><UploadIcon />Upload</Btn>
                  </Actions>
                </PanelHead>
                <Desc>
                  Objects are the fundamental entities stored in Amazon S3. You can use <A>Amazon S3 inventory</A>
                  <ExtLink><ExternalIcon size={23} /></ExtLink>
                  to get a list of all objects in your bucket. For others to access your objects, you'll need to explicitly grant them
                  <br />
                  permissions. <LearnMore>Learn more</LearnMore>
                  <ExtLink><ExternalIcon size={23} /></ExtLink>
                </Desc>
                <FilterRow>
                  <FilterInput>
                    <SearchIcon size={25} />
                    <em>Find objects by prefix</em>
                  </FilterInput>
                  <Pager>
                    <ChevronLeft size={28} strokeWidth={1.500} />
                    <PageNumber>1</PageNumber>
                    <ChevronRight size={28} strokeWidth={1.500} />
                    <PagerDivider />
                    <Settings size={26} strokeWidth={2.200} color="#e8e8ec" />
                  </Pager>
                </FilterRow>
                <TableHead>
                  <SelectCell><Check /></SelectCell>
                  <HeadCell $dim $strong>Name <FilterArrow up /></HeadCell>
                  {columns.map((c, i) => <HeadCell key={c} $end={i === columns.length - 1}>{c} <FilterArrow /></HeadCell>)}
                </TableHead>
                {rows.map((r, i) => (
                  <Row key={r} $last={i === rows.length - 1}>
                    <SelectCell><Check /></SelectCell>
                    <NameCell><FolderIcon /><A>{r}</A></NameCell>
                    <DataCell>Folder</DataCell>
                    <DataCell>-</DataCell>
                    <DataCell $right>-</DataCell>
                    <DataCell>-</DataCell>
                  </Row>
                ))}
              </Panel>
            </Main>
          </Workspace>

          <Footer>
            <Terminal size={24} />
            <FootLink $ml={8}>CloudShell</FootLink>
            <FootLink $ml={37}>Feedback</FootLink>
            <Copyright>© 2025, Amazon Web Services, Inc. or its affiliates.</Copyright>
            <FootLink $ml={45}>Privacy</FootLink>
            <FootLink $ml={38}>Terms</FootLink>
            <FootLink $ml={37}>Cookie preferences</FootLink>
          </Footer>
        </ConsoleBody>
        <ScrollTrack>
          <ScrollArrow />
          <ScrollThumb />
          <ScrollArrow $down />
        </ScrollTrack>
      </Console>

      <Taskbar>
        <Weather>
          <svg width="36" height="26" viewBox="0 0 36 26">
            <defs>
              <linearGradient id="cloud" x1="0" y1="0" x2="0" y2="1">
                <stop offset="0" stopColor="#8fb2ee" />
                <stop offset="1" stopColor="#d8e4fa" />
              </linearGradient>
            </defs>
            <path d="M8 25a7 7 0 0 1-1-14 10 10 0 0 1 19-2 8 8 0 0 1 3 16Z" fill="url(#cloud)" />
          </svg>
          <div>
            15°C
            <Muted>Cloudy</Muted>
          </div>
        </Weather>
        <svg width="36" height="36" viewBox="0 0 36 36">
          <defs>
            <linearGradient id="win" x1="0" y1="0" x2="1" y2="1">
              <stop offset="0" stopColor="#55cdf9" />
              <stop offset="1" stopColor="#0a6fcb" />
            </linearGradient>
          </defs>
          <path d="M0 2a2 2 0 0 1 2-2h15v17H0ZM19 0h15a2 2 0 0 1 2 2v15H19ZM0 19h17v17H2a2 2 0 0 1-2-2ZM19 19h17v15a2 2 0 0 1-2 2H19Z" fill="url(#win)" />
        </svg>
        <TaskSearch><SearchIcon size={26} />Search</TaskSearch>
        <TaskIcons>
          <TaskIcon>
            <svg width="36" height="36" viewBox="0 0 36 36">
              <rect x="0" y="10" width="27" height="26" rx="2" fill="#222" />
              <rect x="9" y="0" width="27" height="26" rx="2" fill="#f4f4f4" />
              <rect x="9" y="10" width="18" height="16" fill="#bfc2c3" />
            </svg>
          </TaskIcon>
          <TaskIcon>
            <FaWhatsapp size={38} color="#1d8a5b" />
            <CountBadge>10</CountBadge>
          </TaskIcon>
          <TaskIcon $open>
            <svg width="36" height="36" viewBox="0 0 36 36">
              <path d="M0 4a2 2 0 0 1 2-2h11l3 4h20v30H0Z" fill="#e8a90f" />
              <path d="M0 8h36v28H0Z" fill="#ffd75e" />
              <path d="M10 36V27a3 3 0 0 1 3-3h10a3 3 0 0 1 3 3v9Z" fill="#1b7fd0" />
              <rect x="13" y="29" width="10" height="2" fill="#0a4f8c" />
            </svg>
          </TaskIcon>
          <TaskIcon>
            <svg width="36" height="36" viewBox="0 0 36 36">
              <path d="M9 6V1h18v5" fill="none" stroke="#29b6f0" strokeWidth="2" />
              <rect y="6" width="36" height="30" rx="4" fill="#11508f" />
              <rect x="10" y="12" width="7" height="7" fill="#f25022" />
              <rect x="19" y="12" width="7" height="7" fill="#7fba00" />
              <rect x="10" y="21" width="7" height="7" fill="#00a4ef" />
              <rect x="19" y="21" width="7" height="7" fill="#ffb900" />
            </svg>
          </TaskIcon>
          <TaskIcon>
            <svg width="0" height="0">
              <defs>
                <linearGradient id="edge" x1="0" y1="1" x2="1" y2="0">
                  <stop offset="0" stopColor="#0c59a4" />
                  <stop offset="0.6" stopColor="#1b9de2" />
                  <stop offset="1" stopColor="#5fdc6e" />
                </linearGradient>
              </defs>
            </svg>
            <FaEdge size={36} style={{ fill: 'url(#edge)' }} />
          </TaskIcon>
          <TaskIcon $running>
            <svg width="36" height="36" viewBox="0 0 36 36">
              <circle cx="18" cy="18" r="18" fill="#ffca28" />
              <path d="M18 0a18 18 0 0 1 15.600 9H18a9 9 0 0 0-8.700 6.700L3.500 7.500A18 18 0 0 1 18 0Z" fill="#e33b2e" />
              <path d="M3.500 7.500l8 14a8 8 0 0 0 7.500 5.300L13 35.300A18 18 0 0 1 3.500 7.500Z" fill="#2e9b46" />
              <circle cx="18" cy="18" r="8" fill="#fff" />
              <circle cx="18" cy="18" r="6.300" fill="#3d7ff0" />
            </svg>
          </TaskIcon>
        </TaskIcons>
        <Tray>
          <TrayIcon $ml={0}><ChevronUp size={24} strokeWidth={2} /></TrayIcon>
          <TrayIcon $ml={25}><NetworkIcon /></TrayIcon>
          <Lang>ENG<br />DE</Lang>
          <TrayIcon $ml={28}><Wifi size={22} strokeWidth={2.200} /></TrayIcon>
          <TrayIcon $ml={14}><VolumeIcon /></TrayIcon>
          <TrayIcon $ml={14}><BatteryIcon /></TrayIcon>
          <Clock>04:16<br />13/07/2025</Clock>
        </Tray>
      </Taskbar>
    </Page>
  );
}
